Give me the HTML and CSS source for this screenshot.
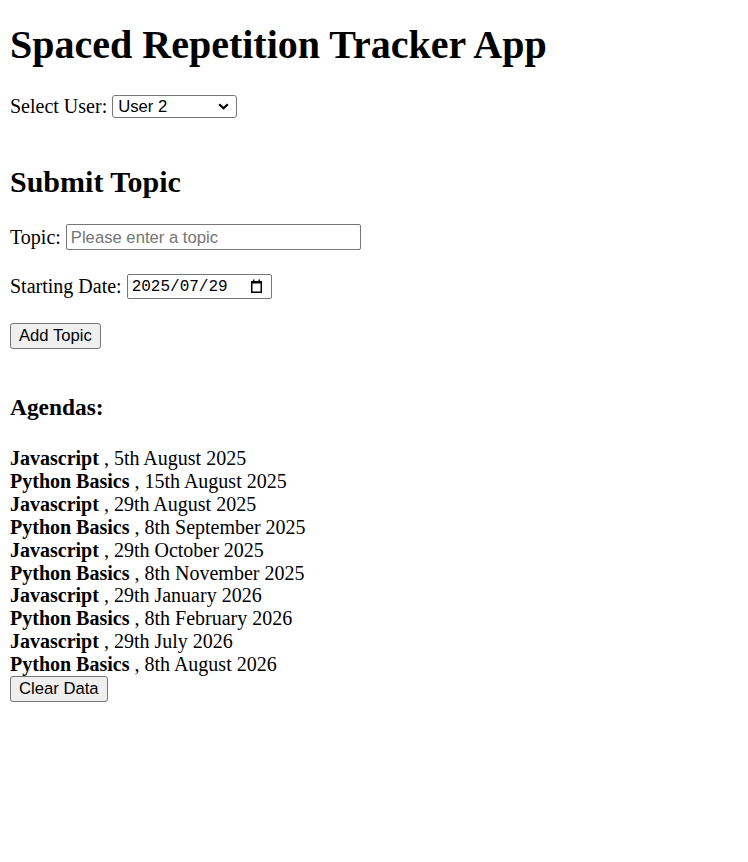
FILE: index.html
```html
<!DOCTYPE html>
<html lang="en">
<head>
<meta charset="utf-8">
<title>Spaced Repetition Tracker App</title>
<link rel="stylesheet" href="styles.css">
</head>
<body>
<h1 class="title">Spaced Repetition Tracker App</h1>
<div class="user-row">
  <label for="user">Select User:</label>
  <span class="select-wrap">
    <select id="user" class="select">
      <option>User 1</option>
      <option selected>User 2</option>
      <option>User 3</option>
    </select>
    <svg class="chevron" width="11" height="7" viewBox="0 0 11 7"><path d="M1.2 1.2 L5.5 5.3 L9.8 1.2" fill="none" stroke="#000" stroke-width="2.2"/></svg>
  </span>
</div>

<h2 class="section-title">Submit Topic</h2>
<form class="topic-form">
  <div class="form-row">
    <label for="topic">Topic:</label>
    <input id="topic" class="text-input" type="text" placeholder="Please enter a topic">
  </div>
  <div class="form-row date-row">
    <label for="date">Starting Date:</label>
    <span class="date-wrap">
      <input id="date" class="date-input" type="text" value="2025/07/29">
      <svg class="cal" width="11" height="14" viewBox="0 0 11 14">
        <rect x="0.75" y="2.75" width="9.5" height="10.5" fill="none" stroke="#000" stroke-width="1.5"/>
        <rect x="0.75" y="2.5" width="9.5" height="2" fill="#000"/>
        <rect x="2" y="0.5" width="1.5" height="3" fill="#000"/>
        <rect x="7.5" y="0.5" width="1.5" height="3" fill="#000"/>
      </svg>
    </span>
  </div>
  <div class="form-row">
    <button type="button" class="btn">Add Topic</button>
  </div>
</form>

<h3 class="agenda-title">Agendas:</h3>
<div class="agenda-list">
  <div class="agenda-item"><b>Javascript</b> , 5th August 2025</div>
  <div class="agenda-item"><b>Python Basics</b> , 15th August 2025</div>
  <div class="agenda-item"><b>Javascript</b> , 29th August 2025</div>
  <div class="agenda-item"><b>Python Basics</b> , 8th September 2025</div>
  <div class="agenda-item"><b>Javascript</b> , 29th October 2025</div>
  <div class="agenda-item"><b>Python Basics</b> , 8th November 2025</div>
  <div class="agenda-item"><b>Javascript</b> , 29th January 2026</div>
  <div class="agenda-item"><b>Python Basics</b> , 8th February 2026</div>
  <div class="agenda-item"><b>Javascript</b> , 29th July 2026</div>
  <div class="agenda-item"><b>Python Basics</b> , 8th August 2026</div>
</div>
<button type="button" class="btn btn-clear">Clear Data</button>
</body>
</html>
```

FILE: styles.css
```css
html, body {
  background: #fff;
}
body {
  margin: 0;
  padding: 22px 10px 10px;
  font-family: "Liberation Serif", "Times New Roman", serif;
  font-size: 20px;
  color: #000;
}
.title {
  font-size: 40px;
  font-weight: bold;
  margin: 0;
  line-height: 46px;
}
.user-row {
  margin-top: 27px;
  height: 23px;
  line-height: 23px;
}
.select-wrap {
  position: relative;
  display: inline-block;
  vertical-align: top;
}
.select {
  -webkit-appearance: none;
  appearance: none;
  box-sizing: border-box;
  width: 125px;
  height: 23px;
  margin: 0;
  padding: 0 0 0 5px;
  border: 1px solid #767676;
  border-radius: 3px;
  background: #fff;
  font-family: "Liberation Sans", Arial, sans-serif;
  font-size: 16.67px;
  color: #000;
  display: block;
}
.chevron {
  position: absolute;
  right: 8px;
  top: 8px;
  pointer-events: none;
}
.section-title {
  font-size: 30px;
  font-weight: bold;
  line-height: 34px;
  margin: 47px 0 25px;
}
.topic-form {
  margin: 0;
}
.form-row {
  display: flex;
  align-items: center;
  gap: 5px;
  margin-bottom: 24px;
  line-height: 23px;
}
.form-row:last-child {
  margin-bottom: 0;
}
.text-input {
  box-sizing: border-box;
  width: 295px;
  height: 26px;
  margin: 0;
  padding: 1px 4px 0;
  border: 1px solid #767676;
  border-radius: 2px;
  font-family: "Liberation Sans", Arial, sans-serif;
  font-size: 16.67px;
  color: #000;
  background: #fff;
}
.text-input::placeholder {
  color: #757575;
}
.date-wrap {
  position: relative;
  display: block;
}
.date-input {
  box-sizing: border-box;
  width: 145px;
  height: 25px;
  margin: 0;
  padding: 0 0 0 4px;
  border: 1px solid #767676;
  border-radius: 2px;
  font-family: "Liberation Mono", "DejaVu Sans Mono", monospace;
  font-size: 16px;
  color: #000;
  background: #fff;
  display: block;
}
.cal {
  position: absolute;
  left: 124px;
  top: 5px;
  pointer-events: none;
}
.btn {
  box-sizing: border-box;
  height: 26px;
  margin: 0;
  padding: 0 8px;
  border: 1px solid #767676;
  border-radius: 3px;
  background: #efefef;
  font-family: "Liberation Sans", Arial, sans-serif;
  font-size: 16.67px;
  color: #000;
}
.agenda-title {
  font-size: 23.4px;
  font-weight: bold;
  line-height: 27px;
  margin: 45px 0 26px;
}
.agenda-list {
  line-height: 22.9px;
}
.agenda-item b {
  font-weight: bold;
}
.btn-clear {
  display: block;
  margin-top: 0;
}
```
